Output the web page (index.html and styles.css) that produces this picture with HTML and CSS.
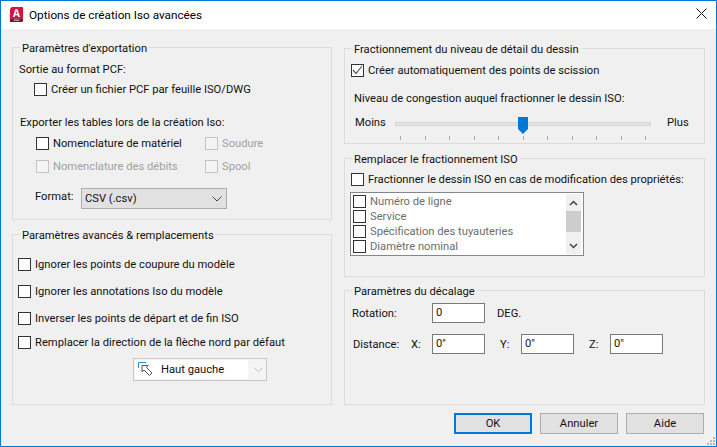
FILE: index.html
```html
<!DOCTYPE html>
<html lang="fr">
<head>
<meta charset="utf-8">
<title>Options de création Iso avancées</title>
<link rel="stylesheet" href="styles.css">
</head>
<body>
<div class="window">
  <header class="titlebar">
    <svg class="app-icon" width="15" height="16" viewBox="0 0 16 17">
      <path d="M1 2 L3 0 H14 Q15 0 15 1 V12 H1 Z" fill="#d4133f"/>
      <path d="M1 12 H15 V14 Q15 16 13 16 H1 Z" fill="#7a1230"/>
      <text x="8" y="10.500" class="app-a">A</text>
      <rect x="5" y="13.400" width="6" height="1.200" fill="#e6b9c4"/>
    </svg>
    <span class="title">Options de création Iso avancées</span>
    <svg class="close" width="11" height="11" viewBox="0 0 11 11"><path d="M.5.5l10 10M10.500.5l-10 10" stroke="#1a1a1a" fill="none"/></svg>
  </header>
  <main class="columns">
    <div class="col col-left">
      <fieldset class="group g-export">
        <legend>Paramètres d'exportation</legend>
        <div class="row r-sortie">Sortie au format PCF:</div>
        <label class="row r-pcf"><span class="cb"></span>Créer un fichier PCF par feuille ISO/DWG</label>
        <div class="row r-exporter">Exporter les tables lors de la création Iso:</div>
        <div class="row r-t1">
          <label class="cell-a"><span class="cb"></span>Nomenclature de matériel</label>
          <label class="cell-b off"><span class="cb"></span>Soudure</label>
        </div>
        <div class="row r-t2">
          <label class="cell-a off"><span class="cb"></span>Nomenclature des débits</label>
          <label class="cell-b off"><span class="cb"></span>Spool</label>
        </div>
        <div class="row r-format">
          <span class="format-label">Format:</span>
          <div class="select"><span>CSV (.csv)</span>
            <svg width="10" height="6" viewBox="0 0 10 6"><path d="M.5.5L5 5 9.500.5" stroke="#444" fill="none"/></svg>
          </div>
        </div>
      </fieldset>
      <fieldset class="group g-adv">
        <legend>Paramètres avancés &amp; remplacements</legend>
        <label class="row r-a1"><span class="cb"></span>Ignorer les points de coupure du modèle</label>
        <label class="row r-a2"><span class="cb"></span>Ignorer les annotations Iso du modèle</label>
        <label class="row r-a2"><span class="cb"></span>Inverser les points de départ et de fin ISO</label>
        <label class="row r-a4"><span class="cb"></span>Remplacer la direction de la flèche nord par défaut</label>
        <div class="combo">
          <div class="combo-field">
            <svg width="15" height="15" viewBox="0 0 15 15">
              <path d="M.5 6V.5H8" stroke="#1e8fe6" fill="none"/>
              <path d="M4 3.500H10L8.500 5.500 14 11 11.500 13.500 6 8 4 10Z" stroke="#555" fill="none"/>
            </svg>
            <span>Haut gauche</span>
          </div>
          <svg class="combo-arrow" width="9" height="6" viewBox="0 0 10 6"><path d="M.5.5L5 5 9.500.5" stroke="#b5b5b5" fill="none"/></svg>
        </div>
      </fieldset>
    </div>
    <div class="col col-right">
      <fieldset class="group g-split">
        <legend>Fractionnement du niveau de détail du dessin</legend>
        <label class="row r-auto"><span class="cb checked"><svg width="11" height="10" viewBox="0 0 11 10"><path d="M1 5l3 3.500L10 1" stroke="#555" stroke-width="1.200" fill="none"/></svg></span>Créer automatiquement des points de scission</label>
        <div class="row r-niveau">Niveau de congestion auquel fractionner le dessin ISO:</div>
        <div class="row r-slider">
          <span class="moins">Moins</span>
          <div class="slider">
            <div class="track"></div>
            <svg class="thumb" width="10" height="17" viewBox="0 0 10 17"><path d="M0 0H10V12L5 17 0 12Z" fill="#0078d7"/></svg>
            <div class="ticks"><i></i><i></i><i></i><i></i><i></i><i></i><i></i><i></i><i></i><i></i><i></i></div>
          </div>
          <span class="plus">Plus</span>
        </div>
      </fieldset>
      <fieldset class="group g-override">
        <legend>Remplacer le fractionnement ISO</legend>
        <label class="row r-frac"><span class="cb"></span>Fractionner le dessin ISO en cas de modification des propriétés:</label>
        <div class="listbox">
          <ul class="items">
            <li><span class="cb"></span>Numéro de ligne</li>
            <li><span class="cb"></span>Service</li>
            <li><span class="cb"></span>Spécification des tuyauteries</li>
            <li><span class="cb"></span>Diamètre nominal</li>
          </ul>
          <div class="scrollbar">
            <svg width="9" height="6" viewBox="0 0 9 6"><path d="M1 5L4.500 1.500 8 5" stroke="#444" stroke-width="1.500" fill="none"/></svg>
            <div class="scroll-thumb"></div>
            <svg class="down" width="9" height="6" viewBox="0 0 9 6"><path d="M1 1L4.500 4.500 8 1" stroke="#444" stroke-width="1.500" fill="none"/></svg>
          </div>
        </div>
      </fieldset>
      <fieldset class="group g-offset">
        <legend>Paramètres du décalage</legend>
        <div class="row r-rot">
          <span class="rot-label">Rotation:</span>
          <div class="input">0</div>
          <span class="deg">DEG.</span>
        </div>
        <div class="row r-dist">
          <span class="dist-label">Distance:</span>
          <span class="axis">X:</span><div class="input">0"</div>
          <span class="axis ax-y">Y:</span><div class="input">0"</div>
          <span class="axis ax-z">Z:</span><div class="input">0"</div>
        </div>
      </fieldset>
    </div>
  </main>
  <footer class="buttons">
    <button class="btn default">OK</button>
    <button class="btn">Annuler</button>
    <button class="btn">Aide</button>
  </footer>
  <svg class="grip" width="9" height="9" viewBox="0 0 9 9"><path d="M7 1h2v2H7zM4 4h2v2H4zM7 4h2v2H7zM1 7h2v2H1zM4 7h2v2H4zM7 7h2v2H7z" fill="#b8b8b8"/></svg>
</div>
</body>
</html>
```
FILE: styles.css
```css
* { box-sizing: border-box; }
html, body { margin: 0; padding: 0; }
body { width: 717px; height: 447px; overflow: hidden; font-family: Roboto, "Noto Sans", sans-serif; font-size: 11.2px; color: #111; }
.window { position: relative; width: 717px; height: 447px; border: 1px solid #0078d7; background: #f0f0f0; display: flex; flex-direction: column; }
.titlebar { height: 28px; background: #fff; display: flex; align-items: center; padding: 0 9px 0 8px; flex: none; }
.app-icon { flex: none; margin-right: 5px; }
.app-a { font: bold 11px "Liberation Sans", sans-serif; fill: #fff; text-anchor: middle; }
.title { flex: 1; font-size: 11.75px; color: #000; padding-bottom: 1px; }
.close { flex: none; align-self: flex-start; margin-top: 7px; }
.columns { display: grid; grid-template-columns: 320px 361px; column-gap: 12px; padding: 11px 0 0 11px; flex: none; }
.col { display: flex; flex-direction: column; }
.col-right { padding-top: 1px; }
.group { margin: 0; padding: 0; border: 1px solid #dcdcdc; min-width: 0; flex: none; }
.group legend { margin-left: 7px; padding: 0 2px; height: 15px; line-height: 17px; }
.g-export { height: 180px; }
.g-adv { height: 178px; margin-top: 7px; }
.g-split { height: 103px; }
.g-override { height: 126px; margin-top: 7px; }
.g-offset { height: 122px; margin-top: 6px; }
.row { display: flex; align-items: center; height: 16px; white-space: nowrap; }
.cb { flex: none; width: 13px; height: 13px; border: 1px solid #333; background: #fff; margin-right: 4px; display: inline-flex; align-items: center; justify-content: center; }
.off { color: #a0a0a0; }
.off .cb { border-color: #c4c4c4; background: #f4f4f4; }
label { display: flex; align-items: center; }
.r-sortie { margin: 6px 0 0 6px; }
.r-pcf { margin: 4px 0 0 21px; }
.r-exporter { margin: 17px 0 0 7px; }
.r-t1 { margin: 5px 0 0 23px; }
.r-t2 { margin: 7px 0 0 23px; }
.cell-a { width: 169px; }
.r-format { margin: 14px 0 0 22px; height: 21px; }
.format-label { width: 46px; padding-bottom: 4px; }
.select { width: 146px; height: 21px; background: #e1e1e1; border: 1px solid #adadad; display: flex; align-items: center; justify-content: space-between; padding: 0 4px 0 3px; }
.r-a1 { margin: 14px 0 0 5px; }
.r-a2 { margin: 11px 0 0 5px; }
.r-a4 { margin: 8px 0 0 5px; }
.combo { width: 134px; height: 23px; margin: 8px 0 0 120px; border: 1px solid #c8c8c8; background: #f4f4f4; display: flex; align-items: center; }
.combo-field { width: 113px; height: 19px; margin-left: 1px; background: #fff; display: flex; align-items: center; padding-left: 3px; }
.combo-field span { margin-left: 8px; }
.combo-arrow { margin-left: 6px; }
.r-auto { margin: 6px 0 0 6px; }
.r-niveau { margin: 12px 0 0 9px; }
.r-slider { position: relative; margin: 9px 0 0 10px; height: 22px; align-items: flex-start; }
.moins { width: 40px; line-height: 16px; }
.slider { position: relative; width: 256px; height: 22px; }
.plus { margin-left: 16px; line-height: 16px; }
.track { height: 4px; margin-top: 7px; background: #e3e3e3; border: 1px solid #d6d6d6; }
.thumb { position: absolute; left: 123px; top: 2px; }
.ticks { display: flex; justify-content: space-between; margin: 10px 5px 0; }
.ticks i { width: 1px; height: 4px; background: #a8a8a8; }
.r-frac { margin: 5px 0 0 6px; }
.listbox { width: 234px; height: 64px; margin: 5px 0 0 5px; border: 1px solid #828790; background: #fff; display: flex; justify-content: space-between; padding: 1px 2px 0; }
.items { list-style: none; margin: 0; padding: 0; color: #6d6d6d; }
.items li { display: flex; align-items: center; height: 15px; white-space: nowrap; }
.items .cb { margin: 0 4px 0 0; }
.scrollbar { width: 15px; height: 60px; background: #f0f0f0; display: flex; flex-direction: column; align-items: center; padding-top: 6px; }
.scroll-thumb { width: 15px; height: 21px; background: #cdcdcd; margin-top: 5px; flex: none; }
.down { margin-top: 11px; }
.r-rot { margin: 5px 0 0 7px; height: 20px; }
.rot-label { width: 80px; }
.input { width: 53px; height: 20px; border: 1px solid #7a7a7a; background: #fff; padding-left: 3px; line-height: 18px; }
.deg { margin-left: 12px; }
.r-dist { margin: 11px 0 0 8px; height: 20px; }
.dist-label { width: 58px; }
.axis { width: 21px; }
.ax-y { margin-left: 15px; }
.ax-z { margin-left: 15px; }
.buttons { display: flex; justify-content: flex-end; gap: 8px; padding: 8px 12px 0 0; }
.btn { width: 78px; height: 21px; padding: 0; background: #e1e1e1; border: 1px solid #adadad; font: inherit; color: #111; }
.btn.default { border: 2px solid #0078d7; }
.grip { position: absolute; right: 1px; bottom: 1px; }
```
